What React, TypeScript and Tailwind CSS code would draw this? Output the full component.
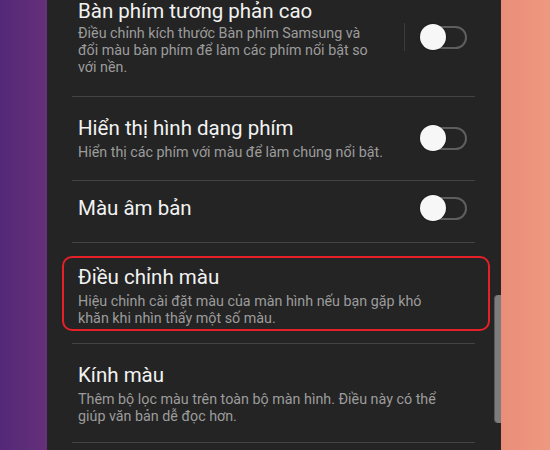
import React from 'react'

type Row = {
  title: string
  lines: string[]
  toggle: boolean
  divider?: boolean
  pad: string
  gap: string
}

const ROWS: Row[] = [
  {
    title: 'Bàn phím tương phản cao',
    lines: [
      'Điều chỉnh kích thước Bàn phím Samsung và',
      'đổi màu bàn phím để làm các phím nổi bật so',
      'với nền.'
    ],
    toggle: true,
    divider: true,
    pad: '-mt-[2px] pb-[20px]',
    gap: 'mt-[1px]'
  },
  {
    title: 'Hiển thị hình dạng phím',
    lines: ['Hiển thị các phím với màu để làm chúng nổi bật.'],
    toggle: true,
    pad: 'pt-[18px] pb-[19px]',
    gap: 'mt-[3px]'
  },
  {
    title: 'Màu âm bản',
    lines: [],
    toggle: true,
    pad: 'pt-[14px] pb-[21px]',
    gap: ''
  },
  {
    title: 'Điều chỉnh màu',
    lines: [
      'Hiệu chỉnh cài đặt màu của màn hình nếu bạn gặp khó',
      'khăn khi nhìn thấy một số màu.'
    ],
    toggle: false,
    pad: 'pt-[21px] pb-[16px]',
    gap: 'mt-[3px]'
  },
  {
    title: 'Kính màu',
    lines: [
      'Thêm bộ lọc màu trên toàn bộ màn hình. Điều này có thể',
      'giúp văn bản dễ đọc hơn.'
    ],
    toggle: false,
    pad: 'pt-[18px] pb-[17px]',
    gap: 'mt-[3px]'
  }
]

function Toggle() {
  return (
    <div className="relative w-[47px] h-[26px] shrink-0">
      <div className="absolute left-[2px] top-[2px] w-[45px] h-[23px] rounded-full border-2 border-[#5e5e5e]" />
      <div className="absolute left-0 top-0 w-[26px] h-[26px] rounded-full bg-[#f7f7f7] shadow-[0_0_2px_rgba(0,0,0,0.5)]" />
    </div>
  )
}

export default function App() {
  return (
    <div
      className="flex w-[550px] h-[450px] overflow-hidden"
      style={{ fontFamily: 'Roboto, "Noto Sans", sans-serif' }}
    >
      {/* Left backdrop */}
      <div className="w-[47px] shrink-0 bg-gradient-to-r from-[#532878] to-[#66307a]" />

      {/* Settings panel */}
      <div className="relative flex-1 bg-[#242424] overflow-hidden">
        <div className="ml-[25px] mr-[26px]">
          {ROWS.map((row, idx) => (
            <div key={idx} className="relative border-b border-[#434343]">
              {idx === 3 && (
                <div className="absolute -left-[10px] -right-[15px] top-[13px] bottom-[12px] rounded-[10px] border-2 border-[#e52028]" />
              )}
              <div className={`flex items-center pl-[6px] pr-[8px] ${row.pad}`}>
                <div className="flex-1 min-w-0">
                  <div className="text-[20.5px] leading-[26px] text-[#f2f2f2] whitespace-nowrap">
                    {row.title}
                  </div>
                  {row.lines.length > 0 && (
                    <div className={`${row.gap} text-[14.3px] leading-[17px] text-[#9c9c9c]`}>
                      {row.lines.map((l, i) => (
                        <div key={i} className="whitespace-nowrap">
                          {l}
                        </div>
                      ))}
                    </div>
                  )}
                </div>
                {row.divider && <div className="w-[1px] h-[28px] bg-[#3c3c3c] mr-[15px]" />}
                {row.toggle && <Toggle />}
              </div>
            </div>
          ))}
        </div>

        {/* Scrollbar */}
        <div className="absolute right-0 top-[295px] w-[7px] h-[128px] rounded-l-[4px] bg-[#7c7c7c] border-l border-[#5a5a5a]" />
      </div>

      {/* Right backdrop */}
      <div className="w-[49px] shrink-0 bg-gradient-to-r from-[#ea8e79] to-[#ef9880]" />
    </div>
  )
}
